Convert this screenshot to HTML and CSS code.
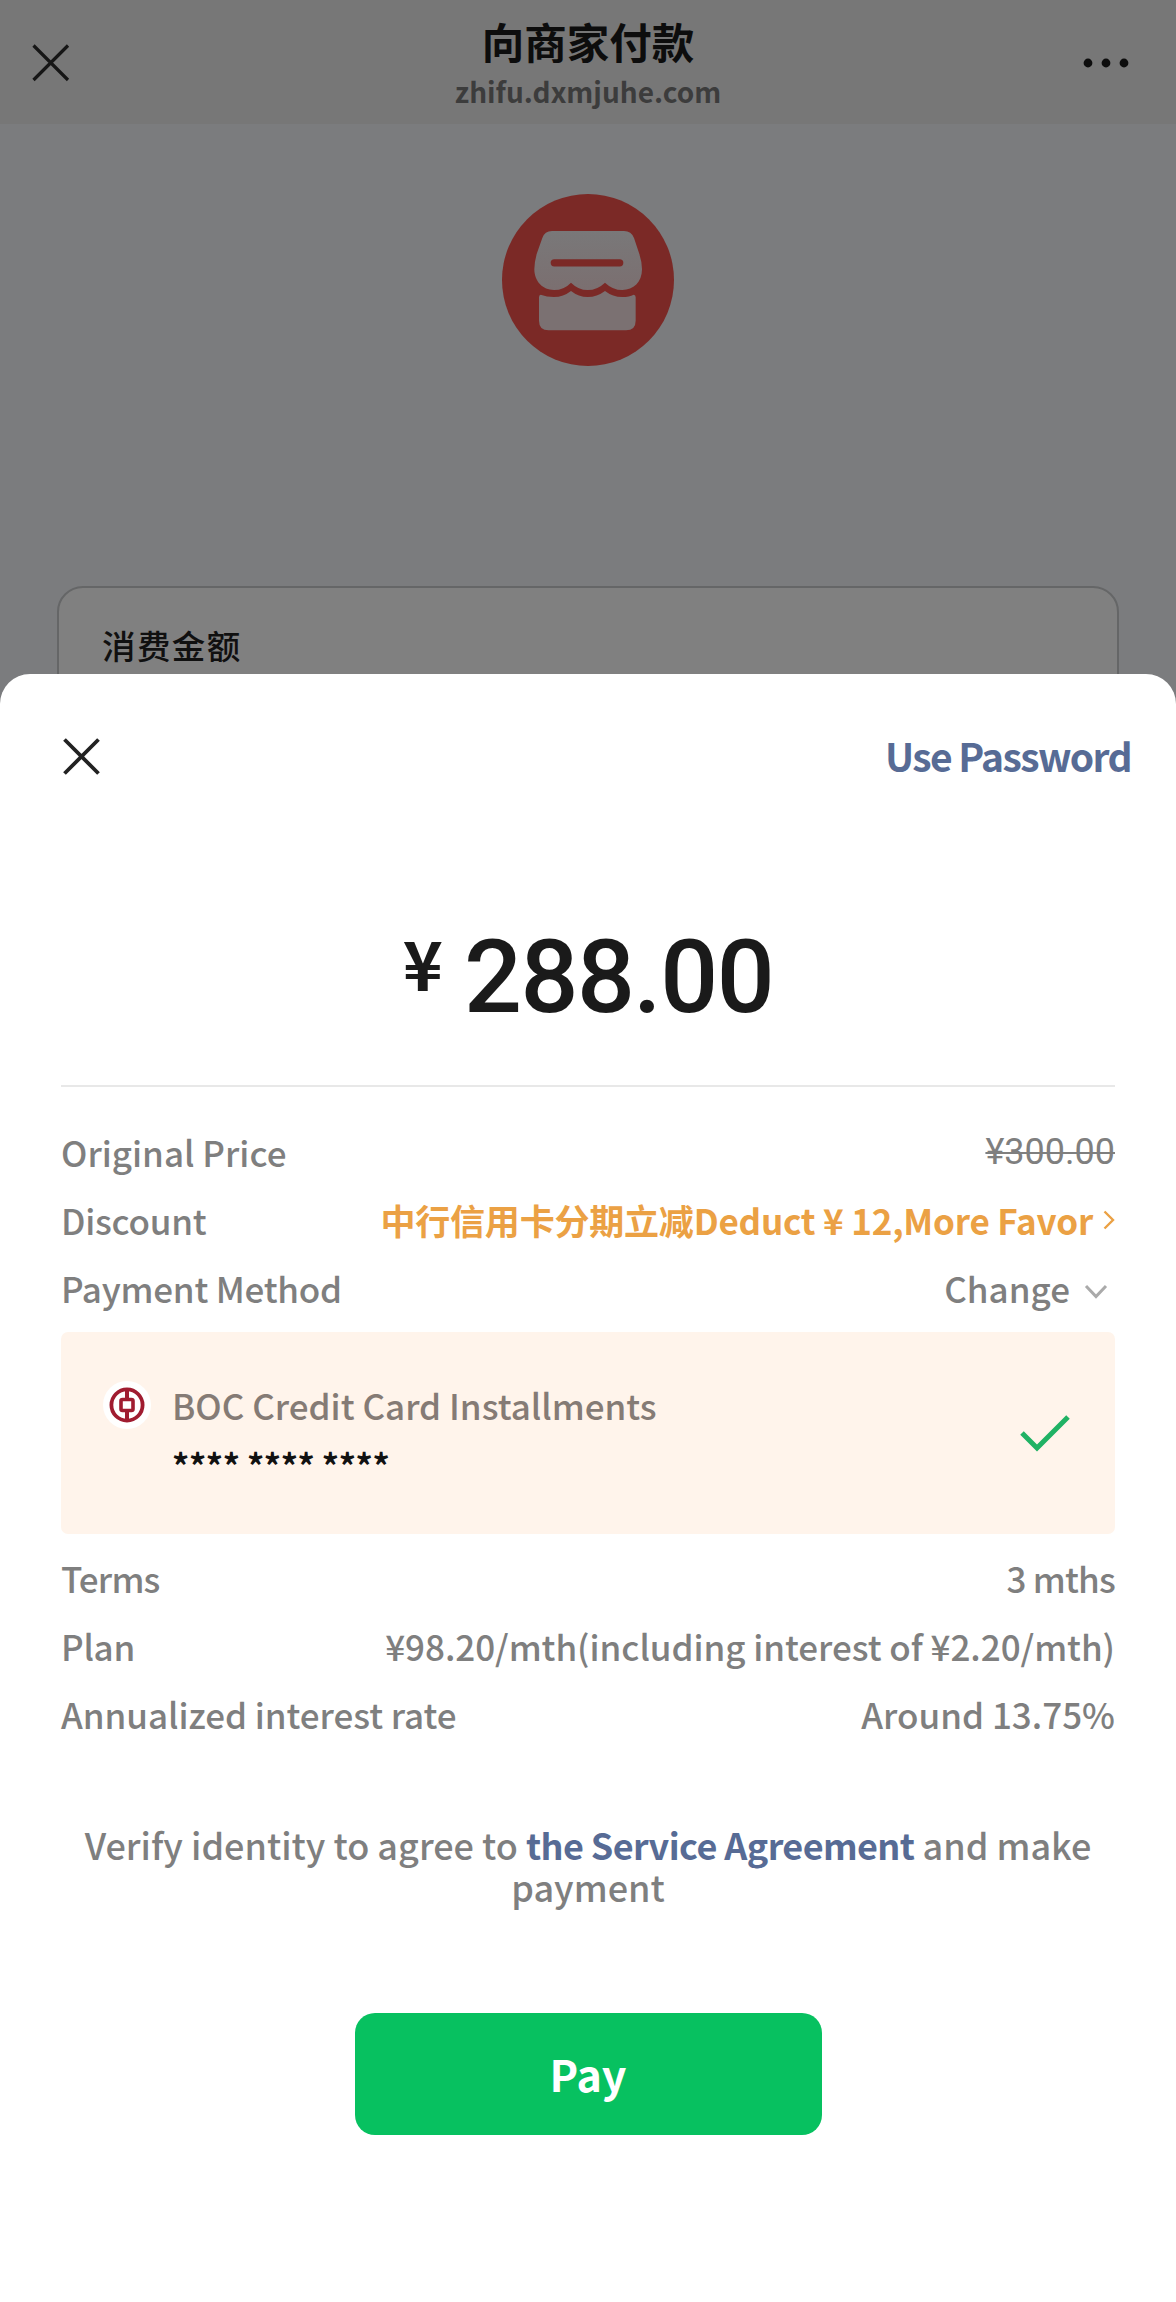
FILE: index.html
```html
<!DOCTYPE html>
<html lang="zh-CN">
<head>
<meta charset="utf-8">
<title>向商家付款</title>
<link rel="stylesheet" href="styles.css">
</head>
<body>
<div class="screen">
  <header class="nav">
    <svg class="nav-close" viewBox="0 0 40 40"><path d="M2.5 2.5 37 37M37 2.5 2.5 37"/></svg>
    <div class="nav-titles">
      <h1 class="nav-title">向商家付款</h1>
      <div class="nav-url">zhifu.dxmjuhe.com</div>
    </div>
    <svg class="nav-more" viewBox="0 0 46 10"><circle cx="5" cy="5" r="4.4"/><circle cx="23" cy="5" r="4.4"/><circle cx="41" cy="5" r="4.4"/></svg>
  </header>

  <main class="merchant">
    <svg class="store" viewBox="66 70 516 516">
      <defs>
        <linearGradient id="shade" x1="0" y1="0" x2="0" y2="1">
          <stop offset="0" stop-color="#797879"/>
          <stop offset="1" stop-color="#7b6f70"/>
        </linearGradient>
      </defs>
      <circle cx="324" cy="328" r="258" fill="#7b2926"/>
      <path fill="url(#shade)" d="M216 181H432Q454 181 462 202L478 250Q486 275 486 296C486 335 460 358 427 358Q398 358 375 336Q352 358 323 358Q295 358 273 336Q252 358 222 358C188 358 163 332 163 296Q163 276 170 250L187 202Q194 181 216 181Z"/>
      <path fill="#7b7172" d="M182 372Q200 379 222 379Q250 379 273 361Q296 379 323 379Q351 379 375 361Q398 379 427 379Q448 379 461 372Q467 372 467 380V450Q467 479 438 479H206Q177 479 177 450V380Q177 372 182 372Z"/>
      <path d="M223 276.500H419" stroke="#7b2926" stroke-width="22" stroke-linecap="round"/>
    </svg>
    <section class="amount-card">消费金额</section>
  </main>

  <section class="sheet">
    <div class="sheet-head">
      <svg class="sheet-close" viewBox="0 0 40 40"><path d="M3.500 4.500 37.500 38.500M37.500 4.500 3.500 38.500"/></svg>
      <a class="use-password">Use Password</a>
    </div>

    <div class="total"><span class="currency">¥</span><span class="value">288.00</span></div>

    <div class="details">
      <div class="row"><span>Original Price</span><s class="original">¥300.00</s></div>
      <div class="row">
        <span class="tight">Discount</span>
        <span class="promo">中行信用卡分期立减Deduct ¥ 12,More Favor<svg class="chevron-right" viewBox="0 0 12 20"><path d="M1.500 1.500 10 10 1.500 18.500"/></svg></span>
      </div>
      <div class="row">
        <span class="tight">Payment Method</span>
        <span class="change">Change<svg class="chevron-down" viewBox="0 0 24 15"><path d="M2 2 12 12.500 22 2"/></svg></span>
      </div>

      <div class="card">
        <div class="bank">
          <svg class="bank-logo" viewBox="0 0 48 48">
            <circle cx="24" cy="24" r="24" fill="#fff"/>
            <g fill="none" stroke="#a01c30">
              <circle cx="24" cy="24" r="15.600" stroke-width="3.800"/>
              <rect x="18" y="18.500" width="12" height="11" rx="1.500" stroke-width="3.600"/>
              <path d="M24 8V18M24 30V40" stroke-width="4"/>
            </g>
          </svg>
          <div class="bank-text">
            <div class="bank-name">BOC Credit Card Installments</div>
            <div class="bank-number">**** **** ****</div>
          </div>
        </div>
        <svg class="check" viewBox="0 0 50 38"><path d="M2 19 17 34 48 3"/></svg>
      </div>

      <div class="row"><span class="tighter">Terms</span><span class="tighter">3 mths</span></div>
      <div class="row"><span class="tight">Plan</span><span class="plan">¥98.20/mth(including interest of ¥2.20/mth)</span></div>
      <div class="row"><span class="plan">Annualized interest rate</span><span>Around 13.75%</span></div>
    </div>

    <p class="agreement">Verify identity to agree to <a class="terms-link">the Service Agreement</a> and make payment</p>
    <button class="pay" type="button">Pay</button>
  </section>
</div>
</body>
</html>
```
FILE: styles.css
```css
* {
  box-sizing: border-box;
}

body {
  margin: 0;
  background: #7b7c7e;
  font-family: "Noto Sans CJK SC", "Noto Sans", sans-serif;
  font-weight: 500;
}

.screen {
  display: flex;
  flex-direction: column;
  width: 1176px;
  height: 2302px;
  overflow: hidden;
}

.nav {
  display: grid;
  grid-template-columns: 90px 1fr 90px;
  align-items: center;
  flex: none;
  height: 124px;
  padding: 0 47px 0 31px;
  background: #777;
}

.nav-close {
  width: 40px;
  height: 40px;
  margin-top: 1px;
  fill: none;
  stroke: #161616;
  stroke-width: 3.2;
}

.nav-titles {
  display: flex;
  flex-direction: column;
  gap: 7px;
  padding-left: 16px;
  text-align: center;
}

.nav-title {
  margin: 0;
  color: #0d0d0d;
  font-size: 42.5px;
  font-weight: 700;
  line-height: 50px;
}

.nav-url {
  color: #3c3c3c;
  font-size: 28px;
  font-weight: 700;
  line-height: 36px;
}

.nav-more {
  justify-self: end;
  width: 46px;
  height: 10px;
  margin-top: 1px;
  fill: #0d0d0d;
}

.merchant {
  display: flex;
  flex-direction: column;
  align-items: center;
  flex: none;
  height: 550px;
  padding: 70px 57px 0;
  overflow: hidden;
}

.store {
  flex: none;
  width: 172px;
  height: 172px;
}

.amount-card {
  flex: none;
  width: 1062px;
  height: 140px;
  margin-top: 220px;
  padding: 33px 43px;
  border: 2px solid #656667;
  border-radius: 26px;
  background: #808080;
  color: #101010;
  font-size: 33.5px;
  line-height: 48px;
  letter-spacing: 1.4px;
}

.sheet {
  display: flex;
  flex-direction: column;
  flex: 1;
  padding: 42px 61px 0;
  border-radius: 30px 30px 0 0;
  background: #fff;
  color: #7f7f7f;
}

.sheet-head {
  display: flex;
  justify-content: space-between;
  align-items: center;
  height: 78px;
  margin-right: -16px;
}

.sheet-close {
  width: 40px;
  height: 40px;
  fill: none;
  stroke: #222;
  stroke-width: 3.8;
}

.use-password {
  color: #576b95;
  font-size: 39px;
  font-weight: 700;
  line-height: 78px;
  letter-spacing: -1.6px;
}

.total {
  display: flex;
  justify-content: center;
  gap: 22px;
  height: 293px;
  padding-top: 131px;
  border-bottom: 2px solid #e8e8e8;
  color: #1a1a1a;
}

.currency {
  padding-top: 2px;
  font-size: 68px;
  font-weight: 700;
  line-height: 70px;
  letter-spacing: -1px;
}

.value {
  font-family: Roboto, sans-serif;
  font-size: 102px;
  line-height: 104px;
  letter-spacing: -1.5px;
}

.details {
  padding-top: 31px;
  font-size: 35px;
}

.row {
  display: flex;
  justify-content: space-between;
  height: 68px;
  line-height: 68px;
  white-space: nowrap;
}

.original {
  font-family: Roboto, sans-serif;
  font-size: 36px;
  font-weight: 400;
  text-decoration-thickness: 2px;
}

.promo,
.change {
  display: flex;
  align-items: center;
}

.promo {
  color: #eba144;
  font-weight: 700;
  letter-spacing: -0.2px;
}

.chevron-right {
  width: 12px;
  height: 20px;
  margin-left: 10px;
  fill: none;
  stroke: #eba144;
  stroke-width: 2.4;
}

.chevron-down {
  width: 24px;
  height: 15px;
  margin: 6px 7px 0 14px;
  fill: none;
  stroke: #aaa;
  stroke-width: 3;
}

.plan {
  letter-spacing: -0.05px;
}

.tight {
  letter-spacing: -0.25px;
}

.tighter {
  letter-spacing: -0.8px;
}

.card {
  display: flex;
  justify-content: space-between;
  height: 202px;
  margin: 10px 0 10px;
  padding: 48px 45px 0 42px;
  border-radius: 7px;
  background: #fff4eb;
}

.bank {
  display: flex;
  gap: 21px;
}

.bank-logo {
  width: 48px;
  height: 48px;
  margin-top: 1px;
}

.bank-name {
  color: #857b75;
  line-height: 50px;
}

.bank-number {
  padding-top: 10px;
  color: #111;
  font-size: 34px;
  font-weight: 700;
  line-height: 50px;
  letter-spacing: -0.35px;
}

.check {
  width: 50px;
  height: 38px;
  margin-top: 34px;
  fill: none;
  stroke: #20b264;
  stroke-width: 5;
}

.agreement {
  margin: 75px 0 0;
  font-size: 36px;
  line-height: 42px;
  text-align: center;
}

.terms-link {
  color: #576b95;
  font-weight: 700;
  letter-spacing: -0.6px;
}

.pay {
  align-self: center;
  width: 467px;
  height: 122px;
  margin-top: 106px;
  padding: 0 0 2px;
  border: 0;
  border-radius: 20px;
  background: #07c160;
  color: #fff;
  font: 700 43px "Noto Sans CJK SC", "Noto Sans", sans-serif;
}
```
